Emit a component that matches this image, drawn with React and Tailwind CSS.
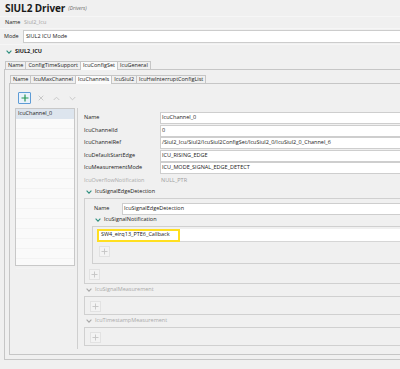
import React from "react";

function Chevron({ gray }) {
  return (
    <svg width="6" height="4" viewBox="0 0 6 4" className="shrink-0">
      <path d="M0.6 0.6 L3 3.2 L5.4 0.6" fill="none" stroke={gray ? "#a9a9a9" : "#2f8f7f"} strokeWidth="1.1" />
    </svg>
  );
}

function PlusSmall() {
  return (
    <div className="w-[11px] h-[11px] border border-[#e2e2e2] bg-[#f3f3f3] flex items-center justify-center">
      <svg width="7" height="7" viewBox="0 0 7 7">
        <path d="M3.5 0.5 V6.5 M0.5 3.5 H6.5" stroke="#c4c4c4" strokeWidth="0.9" />
      </svg>
    </div>
  );
}

function Tab({ label, selected, first }) {
  return (
    <div
      className={
        "px-[2px] flex items-center border-t border-r border-[#c6c6c6] " +
        (first ? "border-l " : "") +
        (selected ? "h-[9px] bg-[#fbfbfb] -mb-px relative" : "h-[8px] bg-[#f0f0f0]")
      }
    >
      <span className="whitespace-nowrap">{label}</span>
    </div>
  );
}

function Field({ label, value, gray }) {
  return (
    <div className="grid grid-cols-[76px_1fr] h-[12px] items-center">
      <span className={gray ? "text-[#ababab]" : ""}>{label}</span>
      {gray ? (
        <span className="pl-[1px] text-[#9d9d9d]">{value}</span>
      ) : (
        <div className="h-[12px] bg-white border border-r-0 border-[#cecece] flex items-center pl-[1px] whitespace-nowrap overflow-hidden">
          {value}
        </div>
      )}
    </div>
  );
}

function SectionHeader({ label, gray, className = "" }) {
  return (
    <div className={"flex items-center gap-[3px] " + className}>
      <Chevron gray={gray} />
      <span className={gray ? "text-[#aaaaaa]" : ""}>{label}</span>
    </div>
  );
}

export default function App() {
  return (
    <div className="w-[400px] h-[369px] bg-[#f0f0f0] overflow-hidden font-['Open_Sans',sans-serif] text-[5.5px] leading-none text-[#222]">
      {/* title */}
      <div className="h-[17px] pl-[5px] flex items-center gap-[3px] border-b border-[#f6f6f6]">
        <span className="text-[10px] font-bold text-[#1a1a1a] tracking-[-0.1px]">SIUL2 Driver</span>
        <span className="italic text-[5px] text-[#6a6a6a] mt-[1px]">(Drivers)</span>
      </div>
      {/* name row */}
      <div className="h-[12px] pl-[5px] flex items-center border-b border-[#f6f6f6]">
        <span className="w-[19px]">Name</span>
        <span className="text-[#a3a3a3]">Siul2_Icu</span>
      </div>
      {/* mode row */}
      <div className="h-[15px] flex items-center">
        <span className="w-[23px] pl-[4px]">Mode</span>
        <div className="flex-1 h-[13px] bg-white border border-r-0 border-[#cccccc] flex items-center pl-[2px]">
          SIUL2 ICU Mode
        </div>
      </div>
      {/* section header */}
      <div className="h-[13px] pl-[6px] pt-[2px] flex items-center gap-[3px] border-t border-[#f6f6f6]">
        <Chevron />
        <span className="font-bold text-[#1a1a1a]">SIUL2_ICU</span>
      </div>
      {/* tab row 1 */}
      <div className="h-[12px] flex items-end pl-[5px]">
        <Tab label="Name" first />
        <Tab label="ConfigTimeSupport" />
        <Tab label="IcuConfigSet" selected />
        <Tab label="IcuGeneral" />
      </div>
      {/* outer frame */}
      <div className="ml-[4px] h-[291px] border-l border-t border-b border-[#c6c6c6] pl-[4px]">
        <div className="h-[13px] flex items-end pl-[1px] pt-[3px]">
          <Tab label="Name" first />
          <Tab label="IcuMaxChannel" />
          <Tab label="IcuChannels" selected />
          <Tab label="IcuSiul2" />
          <Tab label="IcuHwInterruptConfigList" />
        </div>
        {/* inner frame */}
        <div className="h-[272px] border-l border-t border-b border-[#c6c6c6]">
          {/* toolbar */}
          <div className="pt-[8px] pl-[8px] flex gap-[3px]">
            <div className="w-[13px] h-[12px] border border-[#5e9cd6] bg-[#e9f2fb] rounded-[1px] flex items-center justify-center">
              <svg width="8" height="8" viewBox="0 0 8 8">
                <path d="M4 0.5 V7.5 M0.5 4 H7.5" stroke="#239653" strokeWidth="1.2" />
              </svg>
            </div>
            <div className="w-[13px] h-[12px] flex items-center justify-center">
              <svg width="6" height="6" viewBox="0 0 6 6">
                <path d="M0.7 0.7 L5.3 5.3 M5.3 0.7 L0.7 5.3" stroke="#c9c9c9" strokeWidth="1" />
              </svg>
            </div>
            <div className="w-[13px] h-[12px] flex items-center justify-center">
              <svg width="7" height="5" viewBox="0 0 7 5">
                <path d="M0.7 4 L3.5 1.2 L6.3 4" fill="none" stroke="#c9c9c9" strokeWidth="1" />
              </svg>
            </div>
            <div className="w-[13px] h-[12px] flex items-center justify-center">
              <svg width="7" height="5" viewBox="0 0 7 5">
                <path d="M0.7 1 L3.5 3.8 L6.3 1" fill="none" stroke="#c9c9c9" strokeWidth="1" />
              </svg>
            </div>
          </div>
          {/* body */}
          <div className="mt-[4px] flex">
            {/* list */}
            <div className="ml-[5px] w-[60px] h-[158px] border border-[#c8c8c8] bg-[#fafafa]">
              <div className="h-[10px] bg-[#dde5ee] flex items-center pl-[2px]">IcuChannel_0</div>
              {Array.from({ length: 15 }).map((_, i) => (
                <div key={i} className="h-[10px] border-b border-[#f3f3f3]" />
              ))}
            </div>
            {/* form */}
            <div className="ml-[2px] flex-1 h-[241px] border-l border-[#cfcfcf] pl-[6px] pt-[4px]">
              <div className="flex flex-col gap-[0.5px]">
                <Field label="Name" value="IcuChannel_0" />
                <Field label="IcuChannelId" value="0" />
                <Field label="IcuChannelRef" value="/Siul2_Icu/Siul2/IcuSiul2ConfigSet/IcuSiul2_0/IcuSiul2_0_Channel_6" />
                <Field label="IcuDefaultStartEdge" value="ICU_RISING_EDGE" />
                <Field label="IcuMeasurementMode" value="ICU_MODE_SIGNAL_EDGE_DETECT" />
                <Field label="IcuOverflowNotification" value="NULL_PTR" gray />
              </div>
              <SectionHeader label="IcuSignalEdgeDetection" className="h-[10px] pl-[2px]" />
              {/* edge detection box */}
              <div className="mt-[1px] border border-r-0 border-[#d0d0d0] pt-[4px] pb-[3px]">
                <div className="flex items-center h-[12px] pl-[9px]">
                  <span className="w-[28px]">Name</span>
                  <div className="flex-1 h-[12px] bg-white border border-r-0 border-[#cecece] flex items-center pl-[1px]">
                    IcuSignalEdgeDetection
                  </div>
                </div>
                <SectionHeader label="IcuSignalNotification" className="h-[10px] pl-[10px]" />
                <div className="ml-[7px] mt-[1px] border border-r-0 border-[#d0d0d0] pt-[2px] pb-[6px] pl-[4px]">
                  <div className="flex h-[13px] bg-white border-b border-[#d6d6d6]">
                    <div className="w-[83px] h-[13px] border-2 border-yellow-300 flex items-center pl-[2px] whitespace-nowrap">
                      SW4_eirq13_PTE6_Callback
                    </div>
                    <div className="flex-1" />
                  </div>
                  <div className="mt-[4px] ml-[2px]">
                    <PlusSmall />
                  </div>
                </div>
                <div className="mt-[5px] ml-[4px]">
                  <PlusSmall />
                </div>
              </div>
              <SectionHeader label="IcuSignalMeasurement" gray className="h-[12px] pl-[2px]" />
              <div className="border border-r-0 border-[#d0d0d0] pt-[4px] pb-[2px] pl-[5px]">
                <PlusSmall />
              </div>
              <SectionHeader label="IcuTimestampMeasurement" gray className="h-[12px] pl-[2px]" />
              <div className="border border-r-0 border-[#d0d0d0] pt-[4px] pb-[2px] pl-[5px]">
                <PlusSmall />
              </div>
            </div>
          </div>
        </div>
      </div>
    </div>
  );
}
